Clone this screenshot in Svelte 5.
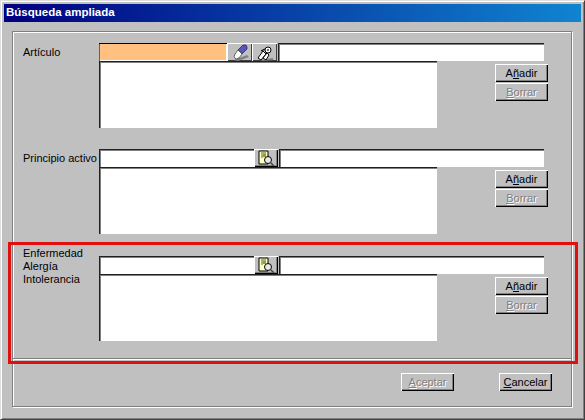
<script>
  const sections = [
    { label: ["Artículo"], kind: "article", top: 11 },
    { label: ["Principio activo"], kind: "search", top: 21 },
    { label: ["Enfermedad", "Alergía", "Intolerancia"], kind: "search", top: 22, tall: true }
  ];
</script>

{#snippet pencil()}
  <svg viewBox="0 0 20 17" width="20" height="17">
    <path d="M4 16 L17 11 L19 13 L8 17 Z" fill="#808080" />
    <path d="M8 6 L13 1 L16 1 L17 3 L17 5 L12 10 Z" fill="#5a55b8" stroke="#1a1a60" stroke-width="0.7" />
    <path d="M8 6 L12 10 L9 14 L6 15 L4 13 L5 10 Z" fill="#fff" stroke="#303030" stroke-width="0.7" />
  </svg>
{/snippet}

{#snippet finder()}
  <svg viewBox="0 0 20 17" width="20" height="17">
    <path d="M5 16 L18 14 L18 16 L8 17 Z" fill="#808080" />
    <path d="M3 14 L8 7 L11 10 L6 16 Z" fill="#fff" stroke="#000" stroke-width="1" />
    <path d="M8 14 L12 9 L14 11 L11 16 Z" fill="#fff" stroke="#000" stroke-width="1" />
    <path d="M6 7 L10 5" stroke="#000" stroke-width="1.2" />
    <circle cx="13" cy="6" r="3" fill="#fff" stroke="#000" stroke-width="1" />
    <circle cx="13" cy="6" r="1" fill="#404040" />
  </svg>
{/snippet}

{#snippet docsearch()}
  <svg viewBox="0 0 16 16" width="16" height="16">
    <path d="M1 1 H10 V14 H1 Z" fill="#ffffc8" stroke="#000" stroke-width="1" />
    <path d="M3 3 H8 M3 5 H6 M3 7 H5" stroke="#307030" stroke-width="1" />
    <rect x="5" y="4" width="3" height="3" fill="#b09030" />
    <circle cx="10" cy="10" r="3.5" fill="#e8e8e8" stroke="#000" stroke-width="1" />
    <path d="M13 13 L15.5 15.5" stroke="#404040" stroke-width="1.5" />
  </svg>
{/snippet}

<div class="window">
  <div class="title">Búsqueda ampliada</div>
  <div class="body">
    <div class="frame">
      {#each sections as s}
        <section style="margin-top: {s.top}px">
          <div class="label" class:tall={s.tall}>
            {#each s.label as line}<div>{line}</div>{/each}
          </div>
          <div class="fields">
            <div class="row">
              {#if s.kind === "article"}
                <input class="field code orange" />
                <button class="icon">{@render pencil()}</button>
                <button class="icon">{@render finder()}</button>
              {:else}
                <input class="field code wide" />
                <button class="icon small">{@render docsearch()}</button>
              {/if}
              <input class="field name" />
            </div>
            <div class="lower">
              <textarea class="list"></textarea>
              <div class="actions">
                <button class="btn"><span>A<u>ñ</u>adir</span></button>
                <button class="btn" disabled><span><u>B</u>orrar</span></button>
              </div>
            </div>
          </div>
        </section>
      {/each}
      <div class="separator"></div>
      <div class="footer">
        <button class="btn" disabled><span><u>A</u>ceptar</span></button>
        <button class="btn"><span><u>C</u>ancelar</span></button>
      </div>
    </div>
  </div>
  <div class="highlight"></div>
</div>

<style>
  :global(body) {
    margin: 0;
    background: #c0c0c0;
  }
  .window {
    position: relative;
    width: 585px;
    height: 420px;
    box-sizing: border-box;
    padding: 3px 3px 2px 3px;
    background: #c0c0c0;
    border-top: 1px solid #dfdfdf;
    border-left: 1px solid #dfdfdf;
    border-right: 1px solid #404040;
    border-bottom: 1px solid #404040;
    box-shadow: inset 1px 1px 0 #fff, inset -1px -1px 0 #808080;
    font: 11px "Liberation Sans", Arial, sans-serif;
    color: #000;
  }
  .title {
    height: 18px;
    line-height: 16px;
    padding-left: 2px;
    background: linear-gradient(90deg, #000080, #1084d0);
    color: #fff;
    font-weight: 700;
    font-size: 11.5px;
  }
  .body {
    padding: 9px 0 0 8px;
  }
  .frame {
    width: 560px;
    height: 376px;
    box-sizing: border-box;
    border: 1px solid #808080;
    box-shadow: 1px 1px 0 #fff, inset 1px 1px 0 #fff;
    padding-left: 10px;
  }
  section {
    display: flex;
  }
  .label {
    width: 76px;
    flex: none;
    line-height: 13px;
    padding-top: 3px;
  }
  .label.tall {
    margin-top: -12px;
    height: 30px;
  }
  .fields {
    width: 445px;
    flex: none;
  }
  .row {
    display: flex;
    height: 18px;
  }
  .field, .list {
    box-sizing: border-box;
    display: block;
    margin: 0;
    padding: 0;
    background: #fff;
    border: none;
    border-radius: 0;
    box-shadow: inset 1px 1px 0 #202020, inset 2px 2px 0 #808080, inset -1px -1px 0 #fff;
    outline: none;
    resize: none;
  }
  .field {
    height: 18px;
  }
  .orange {
    width: 128px;
    flex: none;
    background: #ffc080;
    box-shadow: inset 0 1px 0 #000, inset 1px 0 0 #606060, inset -1px -1px 0 #fff;
  }
  .wide {
    width: 155px;
    flex: none;
  }
  .name {
    flex: 1;
    min-width: 0;
    margin-left: 1px;
  }
  .icon {
    width: 25px;
    height: 18px;
    flex: none;
    padding: 0;
    display: flex;
    align-items: center;
    justify-content: center;
    background: #c0c0c0;
    border: none;
    box-shadow: inset 1px 1px 0 #fff, inset -1px -1px 0 #404040;
  }
  .icon.small {
    width: 24px;
    box-shadow: inset 1px 1px 0 #fff, inset -1px -1px 0 #000, inset -2px -2px 0 #808080;
  }
  .lower {
    display: flex;
    height: 67px;
  }
  .list {
    width: 338px;
    height: 67px;
    flex: none;
  }
  .actions {
    margin: 3px 0 0 58px;
    display: flex;
    flex-direction: column;
    gap: 1px;
    flex: none;
  }
  .btn {
    width: 53px;
    height: 18px;
    padding: 0;
    flex: none;
    background: #c0c0c0;
    border: none;
    border-radius: 0;
    box-shadow: inset 1px 1px 0 #fff, inset -1px -1px 0 #000, inset -2px -2px 0 #808080;
    font: 11px "Liberation Sans", Arial, sans-serif;
    color: #000;
    text-align: center;
  }
  .btn:disabled {
    color: #808080;
    text-shadow: 1px 1px 0 #fff;
  }
  .separator {
    height: 1px;
    margin: 17px 0 0 -10px;
    background: #808080;
    box-shadow: 0 1px 0 #fff;
  }
  .footer {
    display: flex;
    gap: 45px;
    margin: 14px 0 0 378px;
  }
  .highlight {
    position: absolute;
    left: 7px;
    top: 241px;
    width: 564px;
    height: 116px;
    border: 3px solid #e01010;
  }
</style>
